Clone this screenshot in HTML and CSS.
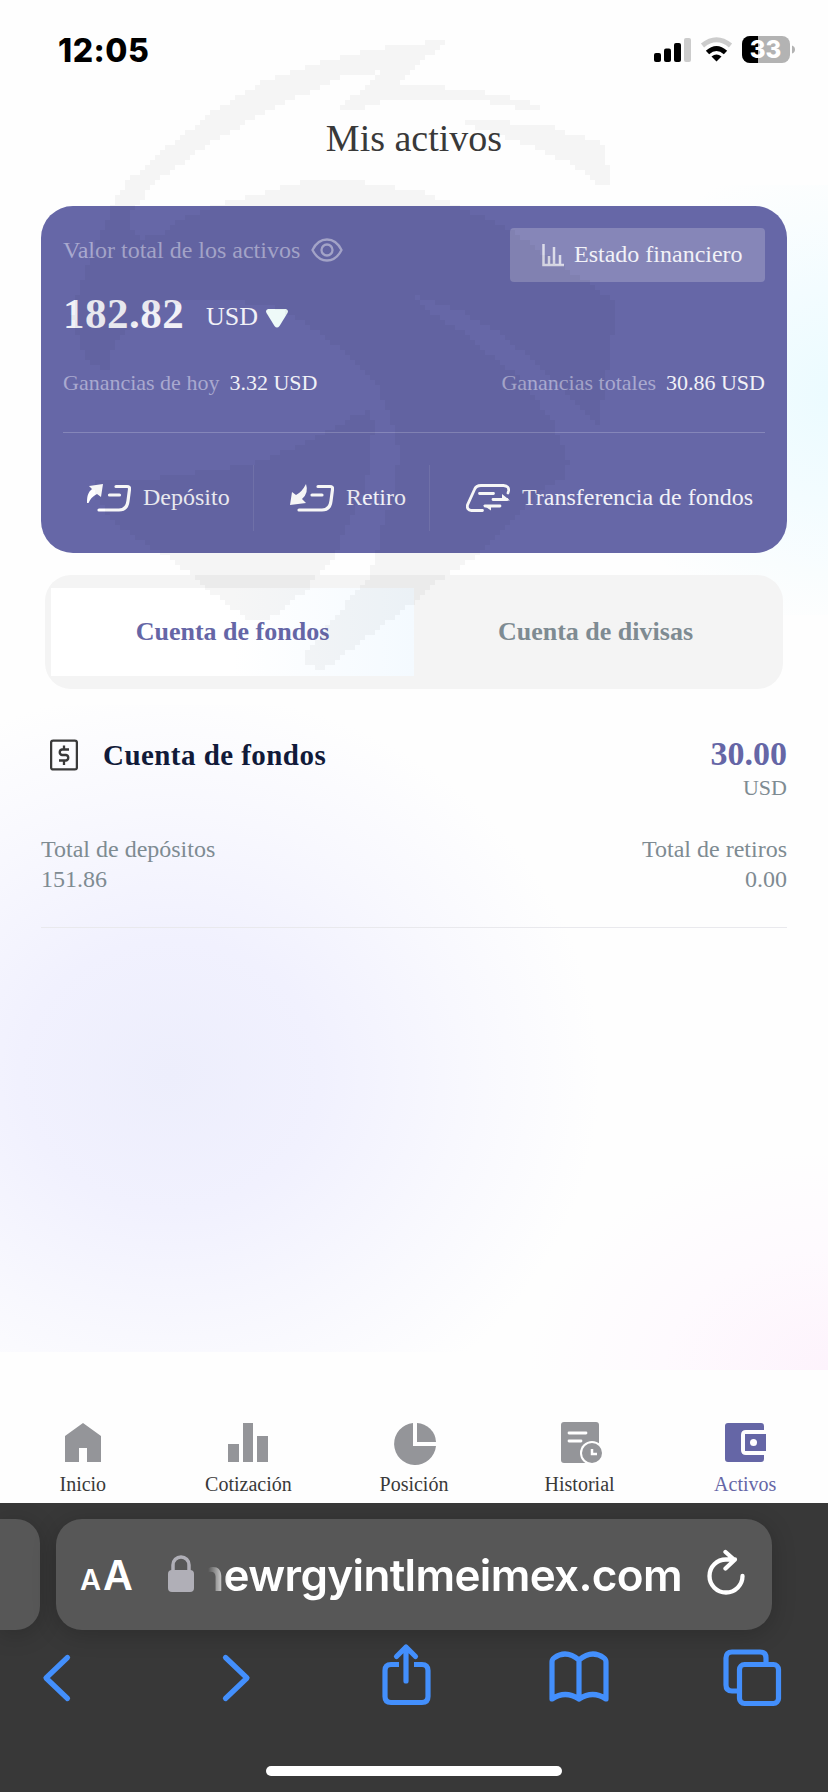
FILE: index.html
```
<!DOCTYPE html>
<html lang="es">
<head>
<meta charset="utf-8">
<title>Mis activos</title>
<link rel="stylesheet" href="styles.css">
</head>
<body>
<main class="page">
  <header class="status">
    <span class="clock">12:05</span>
    <svg class="status-icons" width="142" height="28" viewBox="0 0 142 28">
      <rect x="0" y="17" width="7" height="9" rx="2"/><rect x="10" y="12.500" width="7" height="13.500" rx="2"/><rect x="20" y="7" width="7" height="19" rx="2"/><rect x="30" y="2" width="7" height="24" rx="2" fill="#ccc"/>
      <g fill="none" stroke-width="5"><path d="M48.500 9.500Q62.500-2 76.500 9.500" stroke="#ccc"/><path d="M53.500 16.500q9-8 18 0" stroke="#000"/></g><path d="M57.500 20.500q5-4 10 0l-5 5z"/>
      <rect x="88" y="0" width="48" height="27" rx="8" fill="#b3b3b3"/><path d="M96 0h8v27h-8a8 8 0 0 1-8-8V8a8 8 0 0 1 8-8z"/><path d="M138 9.500q3 1 3 4t-3 4z" fill="#b3b3b3"/>
      <text x="111.500" y="22" text-anchor="middle" class="battery">33</text>
    </svg>
  </header>
  <h1 class="title">Mis activos</h1>

  <section class="card">
    <div class="card-top">
      <div class="label-row"><span class="muted">Valor total de los activos</span>
        <svg width="32" height="24" viewBox="0 0 32 24" fill="none" stroke="#a9a9cf" stroke-width="2.300"><path d="M1.500 12C5 5 9.500 1.500 16 1.500S27 5 30.500 12C27 19 22.500 22.500 16 22.500S5 19 1.500 12z"/><circle cx="16" cy="12" r="5.500"/></svg>
      </div>
      <div class="statement">
        <svg width="22" height="23" viewBox="0 0 22 23" fill="none" stroke="#dcdce9"><path d="M1.500 0v21H22" stroke-width="2.500"/><path d="M7 20v-8M12 20V3M18 20v-9" stroke-width="2.500"/></svg>
        <span>Estado financiero</span>
      </div>
    </div>
    <div class="total"><strong>182.82</strong><span>USD</span><svg width="22" height="19" viewBox="0 0 22 19"><path d="M2 0h18q3 1 1.500 4l-8 13q-2.500 3-5 0L.5 4Q-1 1 2 0z" fill="#eefaf8"/></svg></div>
    <div class="gains"><div><span class="muted">Ganancias de hoy</span><b>3.32 USD</b></div><div><span class="muted">Ganancias totales</span><b>30.86 USD</b></div></div>
    <div class="actions">
      <div class="action deposit"><svg width="44" height="28" viewBox="0 0 44 28"><path d="M0 19C0 11 1.500 8 5 5L2 2 16 0 14 13l-4-3Q4 13 1.500 19z" fill="#fff"/><path d="M29 2.500h11q3 0 2.500 3L41 17q-1 9-9 9H12M22.500 11h10" fill="none" stroke="#fff" stroke-width="3.200" stroke-linecap="round"/></svg><span>Depósito</span></div>
      <div class="action withdraw"><svg width="44" height="28" viewBox="0 0 44 28"><path d="M16 0q3 9-4 15l4 4L0 21 2 8l4 3Q12 8 16 0z" fill="#fff"/><path d="M28 2.500h12q3 0 2.500 3L41 17q-1 9-9 9H9M22 11h10" fill="none" stroke="#fff" stroke-width="3.200" stroke-linecap="round"/></svg><span>Retiro</span></div>
      <div class="action transfer"><svg width="44" height="28" viewBox="0 0 44 28"><path d="M42 9l.5-2q1-5-5-5.500H15q-5 0-6.500 4L1.500 21q-1 5 4 5.500h11M13.500 9.500h14M27 15.500h14M19 22h15" fill="none" stroke="#fff" stroke-width="2.800" stroke-linecap="round"/><path d="M36 10l8 6.500h-8zM17 21h8v5.500z" fill="#fff"/></svg><span>Transferencia de fondos</span></div>
    </div>
  </section>

  <div class="tabs"><div class="tab active">Cuenta de fondos</div><div class="tab">Cuenta de divisas</div></div>

  <section class="account">
    <div class="account-head">
      <svg width="28" height="32" viewBox="0 0 28 32" fill="none" stroke="#393939" stroke-width="2.300"><rect x="1.100" y="1.600" width="25.800" height="28.800" rx="2"/><path d="M19 10.500h-7a2.800 2.800 0 0 0 0 5.500h4a2.800 2.800 0 0 1 0 5.500H9M14 6.500v4M14 22v4"/></svg>
      <h2>Cuenta de fondos</h2>
      <div class="balance"><strong>30.00</strong><span>USD</span></div>
    </div>
    <div class="totals"><div>Total de depósitos<br>151.86</div><div>Total de retiros<br>0.00</div></div>
  </section>

  <nav class="nav">
    <div class="nav-item"><svg width="44" height="44" viewBox="0 0 44 44"><path d="M22 2l18 13v26H26V27h-8v14H4V15z" fill="#949599"/></svg>Inicio</div>
    <div class="nav-item"><svg width="44" height="44" viewBox="0 0 44 44" fill="#949599"><path d="M2 23h11v18H2zM17 2h10v39H17zM31 15h11v26H31z"/></svg>Cotización</div>
    <div class="nav-item"><svg width="44" height="44" viewBox="0 0 44 44" fill="#949599"><path d="M21 2v23h23A21 21 0 1 1 21 2z"/><path d="M25 2a20 20 0 0 1 19 19H25z"/></svg>Posición</div>
    <div class="nav-item"><svg width="44" height="44" viewBox="0 0 44 44"><rect x="3" y="1" width="38" height="41" rx="3" fill="#949599"/><path d="M11 12h17M11 20h12" stroke="#fff" stroke-width="2.800" stroke-linecap="round"/><circle cx="34" cy="32" r="12" fill="#fff"/><circle cx="34" cy="32" r="10" fill="#949599"/><path d="M34 28v5h5" stroke="#fff" stroke-width="2.500" fill="none"/></svg>Historial</div>
    <div class="nav-item current"><svg width="44" height="44" viewBox="0 0 44 44"><path d="M5 2h33q3 0 3 3v4H23q-5 0-5 5v15q0 5 5 5h18v4q0 3-3 3H5q-3 0-3-3V5q0-3 3-3z" fill="#6566a6"/><path d="M22 13h21v17H22z" fill="#6566a6"/><circle cx="30.500" cy="21.500" r="3.500" fill="#fff"/></svg>Activos</div>
  </nav>

  <footer class="browser">
    <div class="address-row">
      <div class="previous-tab"></div>
      <div class="address"><span class="letter-small">A</span><span class="letter-large">A</span>
        <svg class="lock" width="26" height="37" viewBox="0 0 26 37"><rect y="15" width="26" height="22" rx="4" fill="#b0afb7"/><path d="M5 17v-7a8 8 0 0 1 16 0v7" fill="none" stroke="#b0afb7" stroke-width="3.500"/></svg>
        <span class="url">newrgyintlmeimex.com</span>
        <svg class="reload" width="38" height="46" viewBox="0 0 38 46" fill="none" stroke="#fff" stroke-width="4.300" stroke-linecap="round" stroke-linejoin="round"><path d="M35.500 27A16.500 16.500 0 1 1 19 10.500h9M18.500 3l9 8-9 8.500"/></svg>
      </div>
    </div>
    <svg class="toolbar" width="828" height="70" viewBox="0 0 828 70" fill="none" stroke="#438ffc" stroke-width="5.200" stroke-linecap="round" stroke-linejoin="round">
      <path d="M67.500 17.500L46 38l21.500 20.500M225.500 17.500L247 38l-21.500 20.500"/>
      <path d="M399 24.500h-8q-6 0-6 6v26q0 6 6 6h31q6 0 6-6v-26q0-6-6-6h-8" stroke-linecap="butt"/><path d="M406 41V7M396.500 16.500L406 7l9.500 9.500"/>
      <path d="M579 20q-13-11-25-2-2 1.500-2 4v37q13-9 27 0zM579 20q13-11 25-2 2 1.500 2 4v37q-13-9-27 0"/>
      <rect x="739.500" y="24.500" width="39" height="39" rx="5"/><path d="M739 51h-7q-6 0-6-6V18q0-6 6-6h28q6 0 6 6v7" stroke-linecap="butt"/>
    </svg>
    <div class="home-indicator"></div>
  </footer>
  <canvas class="watermark" width="166" height="136"></canvas>
</main>
<script src="watermark.js"></script>
</body>
</html>
```
FILE: styles.css
```
* { box-sizing: border-box; }
body { margin: 0; font-family: "Liberation Serif", "Times New Roman", serif; }
.page { position: relative; width: 828px; height: 1792px; overflow: hidden; display: flex; flex-direction: column;
  background:
    radial-gradient(ellipse 250px 240px at 250px 210px, #ebfbff 0%, #f3fcff 45%, #ffffff00 100%) 588px 185px / 240px 430px no-repeat,
    radial-gradient(ellipse 430px 385px at 170px 370px, #edeefc 0%, #f1f1fe 35%, #f8f8fe 68%, #ffffff00 100%) 0 705px / 600px 647px no-repeat,
    radial-gradient(ellipse 300px 220px at 300px 215px, #fdf3fc 0%, #fefafe 55%, #ffffff00 100%) 528px 1155px / 300px 215px no-repeat,
    #fefefe; }
.status { height: 100px; padding: 36px 32px 0 58px; display: flex; justify-content: space-between; }
.clock { font: 800 32px/29px Inter, sans-serif; letter-spacing: .5px; }
.battery { font: 800 24px Inter, sans-serif; fill: #fff; }
.title { height: 106px; margin: 0; padding-top: 17px; font-weight: 400; font-size: 38px; line-height: 42px; text-align: center; color: #393939; }
.card { height: 347px; margin: 0 41px; padding: 22px 22px 0; border-radius: 32px; background: #6667a7; color: #f1f1f7; font-size: 24px; }
.card-top { display: flex; justify-content: space-between; height: 54px; }
.label-row { display: flex; gap: 11px; height: 44px; align-items: center; }
.muted { color: #a9a9cf; }
.statement { width: 255px; height: 54px; border-radius: 4px; background: #8686b8; display: flex; align-items: center; padding-left: 32px; gap: 10px; }
.statement span { margin-top: -2px; }
.total { display: flex; align-items: center; height: 63px; }
.total strong { font-size: 43px; width: 143px; letter-spacing: .5px; }
.total span { font-size: 26px; margin: 7px 8px 0 0; }
.total svg { margin-top: 10px; }
.gains { display: flex; justify-content: space-between; height: 88px; padding-top: 23px; font-size: 22px; border-bottom: 1px solid #8586b9; line-height: 29px; }
.gains div { display: flex; gap: 10px; }
.gains b { font-weight: 400; font-size: 22px; }
.actions { display: flex; padding-top: 32px; }
.action { display: flex; height: 66px; align-items: center; gap: 12px; }
.action svg { flex: none; }
.action span { margin-top: -1px; }
.deposit { width: 191px; padding-left: 24px; border-right: 1px solid #7475af; }
.withdraw { width: 176px; padding-left: 36px; border-right: 1px solid #7475af; }
.transfer { padding-left: 36px; white-space: nowrap; }
.tabs { height: 114px; margin: 22px 45px 0; padding: 13px 6px; border-radius: 26px; background: #f4f4f4; display: flex; }
.tab { flex: 1; display: flex; justify-content: center; align-items: center; color: #7e8b92; font-size: 26px; font-weight: 700; }
.tab.active { color: #6566a6; background: linear-gradient(90deg, #fff 50%, #f4faff); }
.account { height: 239px; margin: 0 41px; border-bottom: 1px solid #e9e9ed; color: #7e8b92; }
.account-head { height: 137px; padding: 50px 0 0 9px; display: flex; align-items: flex-start; }
.account h2 { margin: 0 auto 0 25px; color: #111a39; font-size: 29px; line-height: 33px; letter-spacing: .45px; }
.balance { display: flex; flex-direction: column; align-items: flex-end; margin-top: -3px; font-size: 22px; line-height: 31px; }
.balance strong { color: #6566a6; font-size: 34px; line-height: 36px; }
.totals { display: flex; justify-content: space-between; padding-top: 8px; font-size: 24px; line-height: 30px; }
.totals div:last-child { text-align: right; }
.nav { margin-top: auto; height: 82px; display: flex; flex: none; }
.nav-item { flex: 1; display: flex; flex-direction: column; align-items: center; font-size: 20px; line-height: 22px; color: #393939; gap: 8px; }
.nav-item.current { color: #6566a6; }
.browser { flex: none; height: 289px; background: #383838; overflow: hidden; }
.address-row { height: 127px; padding-top: 16px; display: flex; gap: 16px; }
.previous-tab { width: 40px; height: 111px; background: #575757; border-radius: 0 24px 24px 0; box-shadow: 0 4px 24px #0003; }
.address { width: 716px; height: 111px; border-radius: 26px; background: #575757; box-shadow: 0 4px 24px #0003; display: flex; align-items: center; padding-left: 24px; color: #fff; font-family: Inter, "Liberation Sans", sans-serif; }
.letter-small { font-size: 29px; font-weight: 600; padding-top: 10px; }
.letter-large { font-size: 41px; font-weight: 600; margin-left: 2px; }
.lock { margin: 0 0 2px 35px; }
.url { width: 474px; margin-left: 14px; display: flex; justify-content: flex-end; overflow: hidden; font-size: 44px; font-weight: 600; line-height: 60px; letter-spacing: -.65px; -webkit-mask-image: linear-gradient(90deg, transparent, #000 20px); mask-image: linear-gradient(90deg, transparent, #000 20px); }
.reload { margin: 0 0 6px 25px; }
.toolbar { display: block; margin-top: 10px; }
.home-indicator { width: 296px; height: 10px; margin: 56px 0 0 266px; border-radius: 5px; background: #fff; }
.watermark { position: absolute; left: 0; top: 0; width: 830px; height: 680px; image-rendering: pixelated; opacity: .038; pointer-events: none; }
```
FILE: watermark.js
```
// Coarse-grained emblem laid over the page
const shapes = [
  [449,41,404,44,364,52,317,63,264,81,211,113,169,146,129,180,113,204,103,230,87,265,77,295,72,318,80,345,92,365,108,372,108,355,120,335,147,312,180,302,230,300,280,308,313,328,347,355,377,385,387,408,393,428,398,448,397,482,390,505,380,535,377,553,370,575,343,607,317,640,301,655,311,667,323,671,359,643,412,603,449,573,480,553,513,518,543,488,563,478,568,462,558,435,553,422,540,405,520,378,490,355,463,332,430,312,413,295,430,300,463,312,497,332,530,358,563,388,587,415,597,428,603,395,610,355,614,325,614,302,597,288,563,267,513,232,463,208,422,192,364,182,301,182,264,193,217,205,180,220,163,233,143,238,130,228,130,212,138,203,158,180,211,143,275,107,343,77,379,72,370,83,335,112,348,112,383,102,488,102,520,108,547,112,523,100,475,90,436,87,399,87,412,68],
  [457,120,544,124,565,132,604,143,610,185,599,185,570,163,528,145,491,133],
  [372,412,360,413,340,425,307,442,263,460,230,468,157,478,93,482,90,488,113,522,143,542,165,555,174,560,211,593,248,618,269,620,306,590,333,557,347,528,363,495,370,462,373,428]
];
const ctx = document.querySelector('.watermark').getContext('2d');
const paths = shapes.map(s => {
  const p = new Path2D();
  for (let i = 0; i < s.length; i += 2) p.lineTo(s[i] / 5, s[i + 1] / 5);
  p.closePath();
  return p;
});
for (let y = 0; y < 136; y++)
  for (let x = 0; x < 166; x++)
    if (paths.some(p => ctx.isPointInPath(p, x + 0.5, y + 0.5))) ctx.fillRect(x, y, 1, 1);
```
